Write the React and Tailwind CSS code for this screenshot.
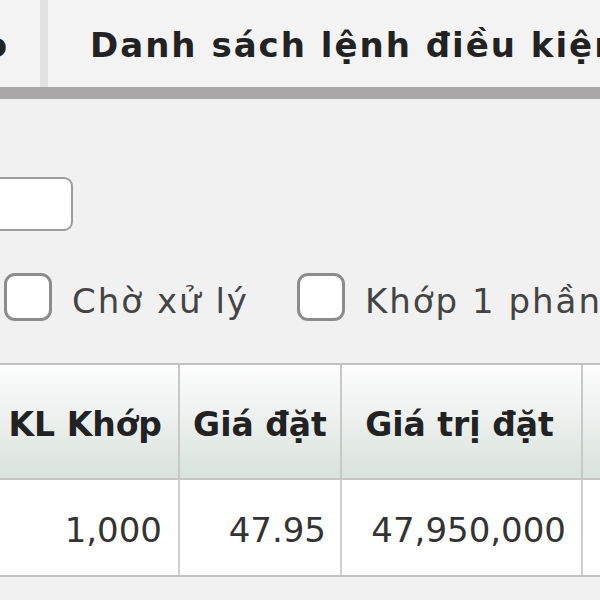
export default function App() {
  return (
    <div className="w-[600px] h-[600px] overflow-hidden bg-[#f1f1f1] font-['DejaVu_Sans',sans-serif]">
      {/* tab bar */}
      <div className="flex h-[87px] bg-[#f3f3f3] overflow-hidden">
        <div className="w-[40px] shrink-0 overflow-hidden flex justify-end items-center pt-[3px]">
          <span className="whitespace-nowrap text-[34px] font-bold text-[#222] mr-[33px]">Đặt lệnh theo</span>
        </div>
        <div className="w-[8px] shrink-0 bg-[#e2e2e2]" />
        <div className="pl-[42px] pt-[4px] shrink-0 flex items-center text-[34px] font-bold text-[#222] whitespace-nowrap tracking-[2px]">
          Danh sách lệnh điều kiện
        </div>
      </div>
      <div className="h-[12px] bg-[#aaa7a9]" />

      {/* filters */}
      <div className="pt-[78px]">
        <div className="-ml-[10px] w-[83px] h-[54px] rounded-[9px] border-2 border-[#9c9c9c] bg-white" />
      </div>
      <div className="flex items-center mt-[42px] h-[48px] overflow-hidden">
        <div className="ml-[4px] w-[48px] h-[48px] rounded-[11px] border-[3px] border-[#8c8c8c] bg-white shrink-0" />
        <span className="ml-[20px] pt-[8px] shrink-0 text-[34px] text-[#444] whitespace-nowrap tracking-[2px]">Chờ xử lý</span>
        <div className="ml-[48px] w-[48px] h-[48px] rounded-[11px] border-[3px] border-[#8c8c8c] bg-white shrink-0" />
        <span className="ml-[20px] pt-[8px] shrink-0 text-[34px] text-[#444] whitespace-nowrap tracking-[2px]">Khớp 1 phần</span>
      </div>

      {/* table */}
      <div className="mt-[42px] border-t-2 border-[#c2c2c2]">
        <div className="flex h-[115px] bg-gradient-to-b from-[#fdfdfd] to-[#d9e2dd] border-b-2 border-[#c6c6c6] text-[33px] font-bold text-[#222] whitespace-nowrap">
          <div className="w-[180px] shrink-0 flex items-center justify-end pr-[16px] pt-[6px] border-r-2 border-[#c8c8c8]">KL Khớp</div>
          <div className="w-[162px] shrink-0 flex items-center justify-center pt-[6px] border-r-2 border-[#c8c8c8]">Giá đặt</div>
          <div className="w-[241px] shrink-0 flex items-center justify-center pt-[6px] pr-[4px] border-r-2 border-[#c8c8c8]">Giá trị đặt</div>
          <div className="flex-1" />
        </div>
        <div className="flex h-[97px] bg-white border-b-2 border-[#c2c2c2] text-[34px] text-[#333] whitespace-nowrap">
          <div className="w-[180px] shrink-0 flex items-center justify-end pr-[16px] pt-[6px] border-r-2 border-[#cfcfcf]">1,000</div>
          <div className="w-[162px] shrink-0 flex items-center justify-end pr-[14px] pt-[6px] border-r-2 border-[#cfcfcf]">47.95</div>
          <div className="w-[241px] shrink-0 flex items-center justify-end pr-[15px] pt-[6px] border-r-2 border-[#cfcfcf]">47,950,000</div>
          <div className="flex-1" />
        </div>
      </div>
    </div>
  );
}
